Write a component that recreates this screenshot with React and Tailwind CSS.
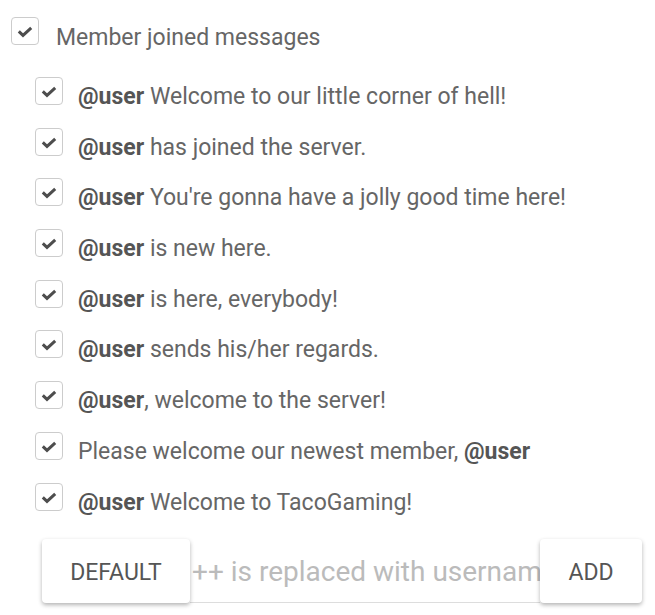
import React from "react";

const messages = [
  [["@user", true], [" Welcome to our little corner of hell!", false]],
  [["@user", true], [" has joined the server.", false]],
  [["@user", true], [" You're gonna have a jolly good time here!", false]],
  [["@user", true], [" is new here.", false]],
  [["@user", true], [" is here, everybody!", false]],
  [["@user", true], [" sends his/her regards.", false]],
  [["@user", true], [", welcome to the server!", false]],
  [["Please welcome our newest member, ", false], ["@user", true]],
  [["@user", true], [" Welcome to TacoGaming!", false]],
];

function Check() {
  return (
    <span className="flex h-[28px] w-[28px] shrink-0 items-center justify-center rounded-[4px] border border-[#cccccc] bg-white">
      <svg width="16" height="12" viewBox="0 0 16 12" className="mt-[2px]">
        <path d="M1.8 5.4 L6 9.4 L14.2 1.8" fill="none" stroke="#4d4d4d" strokeWidth="3" />
      </svg>
    </span>
  );
}

export default function App() {
  return (
    <div
      className="w-[655px] h-[615px] bg-white text-[#666] text-[23px]"
      style={{ fontFamily: "Roboto, 'Liberation Sans', sans-serif" }}
    >
      <div className="pl-[11px] pt-[17px]">
        <div className="flex items-start gap-[17px] h-[60px]">
          <Check />
          <span className="pt-[7px] leading-[27px]">Member joined messages</span>
        </div>
        <div className="pl-[24px]">
          {messages.map((parts, i) => (
            <div key={i} className="flex items-start gap-[15px] h-[50.7px]">
              <Check />
              <span className="pt-[6px] leading-[27px] whitespace-nowrap">
                {parts.map(([t, b], j) =>
                  b ? (
                    <b key={j} className="font-bold text-[#555]">{t}</b>
                  ) : (
                    <span key={j}>{t}</span>
                  )
                )}
              </span>
            </div>
          ))}
        </div>
      </div>
      <div className="mt-[6px] ml-[42px] flex w-[600px] h-[64px] items-stretch">
        <button className="w-[148px] shrink-0 rounded-[4px] bg-white pt-[4px] text-[#555] shadow-[0_2px_4px_rgba(0,0,0,0.3)] z-10">
          DEFAULT
        </button>
        <div className="flex-1 min-w-0 overflow-hidden border-b border-[#ddd] flex items-center pt-[2px]">
          <span className="pl-[2px] whitespace-nowrap text-[#bbb] text-[28px]">++ is replaced with username</span>
        </div>
        <button className="w-[102px] shrink-0 rounded-[4px] bg-white pt-[4px] text-[#555] shadow-[0_2px_4px_rgba(0,0,0,0.3)] z-10">
          ADD
        </button>
      </div>
    </div>
  );
}
